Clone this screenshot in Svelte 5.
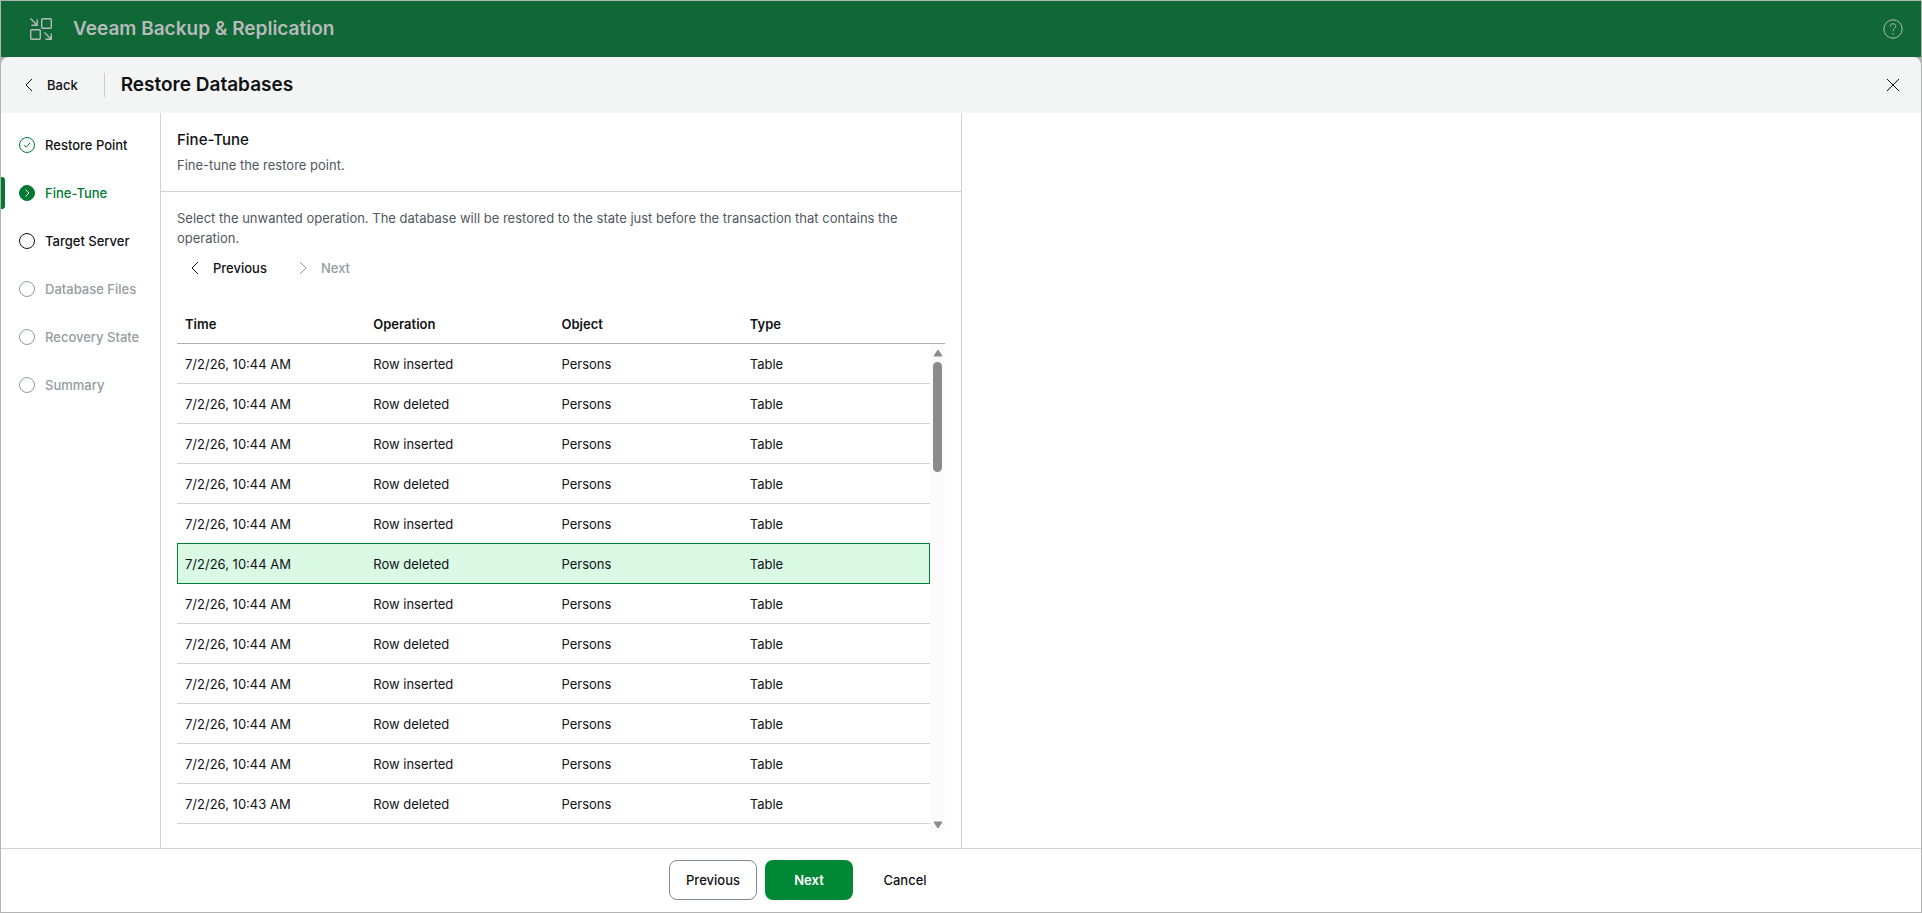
<script lang="ts">
	type Step = { label: string; state: 'done' | 'active' | 'open' | 'disabled' };

	const steps: Step[] = [
		{ label: 'Restore Point', state: 'done' },
		{ label: 'Fine-Tune', state: 'active' },
		{ label: 'Target Server', state: 'open' },
		{ label: 'Database Files', state: 'disabled' },
		{ label: 'Recovery State', state: 'disabled' },
		{ label: 'Summary', state: 'disabled' }
	];

	const operations = Array.from({ length: 12 }, (_, i) => ({
		time: i === 11 ? '7/2/26, 10:43 AM' : '7/2/26, 10:44 AM',
		operation: i % 2 ? 'Row deleted' : 'Row inserted',
		object: 'Persons',
		type: 'Table'
	}));

	let selected = $state(5);
</script>

{#snippet chevron(dir: string)}
	<svg class="chevron" viewBox="0 0 16 16" aria-hidden="true">
		<path d={dir === 'left' ? 'M11 2 5 8l6 6' : 'M5 2l6 6-6 6'} />
	</svg>
{/snippet}

<div class="app">
	<header class="topbar">
		<svg class="logo" viewBox="0 0 24 24" aria-hidden="true">
			<rect x="12.7" y="1.7" width="9.6" height="9.6" rx="1" />
			<rect x="1.7" y="12.7" width="9.6" height="9.6" rx="1" />
			<path d="M1.500 1.500 8 8M8.200 2.500v5.700H2.500M15.500 15.500 22 22M22.300 16.500v5.800h-5.800" />
		</svg>
		<span class="product">Veeam Backup &amp; Replication</span>
		<button class="icon-button" type="button" aria-label="Help">
			<svg viewBox="0 0 20 20" width="20" height="20">
				<circle cx="10" cy="10" r="9.2" />
				<path d="M7.200 7.500c0-1.700 1.200-2.700 2.800-2.700s2.800 1 2.800 2.500c0 2.200-2.800 2.300-2.800 4.900M10 14v1.600" />
			</svg>
		</button>
	</header>

	<div class="titlebar">
		<button class="back" type="button">{@render chevron('left')}Back</button>
		<h1>Restore Databases</h1>
		<button class="icon-button close" type="button" aria-label="Close">
			<svg viewBox="0 0 20 20" width="20" height="20">
				<path d="m4 4 12 12M16 4 4 16" />
			</svg>
		</button>
	</div>

	<div class="content">
		<div class="wizard">
			<nav class="steps">
				{#each steps as step}
					<button class="step {step.state}" type="button" disabled={step.state === 'disabled'}>
						<svg viewBox="0 0 16 16" aria-hidden="true">
							<circle cx="8" cy="8" r="7.5" />
							{#if step.state === 'done'}
								<path d="m5 8.200 2.200 2L11 6" />
							{:else if step.state === 'active'}
								<path d="m6.500 4.500 3.500 3.500-3.500 3.500" />
							{/if}
						</svg>
						{step.label}
					</button>
				{/each}
			</nav>

			<main class="panel">
				<div class="panel-head">
					<h2>Fine-Tune</h2>
					<p>Fine-tune the restore point.</p>
				</div>
				<div class="panel-body">
					<p>
						Select the unwanted operation. The database will be restored to the state just before the
						transaction that contains the operation.
					</p>
					<div class="toolbar">
						<button type="button">{@render chevron('left')}Previous</button>
						<button type="button" disabled>{@render chevron('right')}Next</button>
					</div>
					<div class="grid">
						<div class="table-wrap">
							<table>
								<thead>
									<tr>
										<th>Time</th>
										<th>Operation</th>
										<th>Object</th>
										<th>Type</th>
									</tr>
								</thead>
								<tbody>
									{#each operations as op, i}
										<tr class:selected={selected === i} onclick={() => (selected = i)}>
											<td>{op.time}</td>
											<td>{op.operation}</td>
											<td>{op.object}</td>
											<td>{op.type}</td>
										</tr>
									{/each}
								</tbody>
							</table>
						</div>
						<div class="scroll" aria-hidden="true">
							<div class="scroll-head"></div>
							<div class="track">
								<svg viewBox="0 0 10 8"><path d="M5 1 9 7H1z" /></svg>
								<div class="thumb"></div>
								<svg viewBox="0 0 10 8"><path d="M5 7 1 1h8z" /></svg>
							</div>
						</div>
					</div>
				</div>
			</main>
		</div>
		<aside class="side"></aside>
	</div>

	<footer>
		<div class="actions">
			<button type="button" class="outlined">Previous</button>
			<button type="button" class="primary">Next</button>
			<button type="button">Cancel</button>
		</div>
	</footer>
</div>

<style>
	:global(body) {
		margin: 0;
	}
	.app {
		display: flex;
		flex-direction: column;
		box-sizing: border-box;
		min-height: 100vh;
		border: 1px solid #b3b3b3;
		background: #b3b3b3;
		color: #0f1214;
		font-family: Inter, 'Liberation Sans', sans-serif;
		font-size: 13px;
		line-height: 20px;
	}
	button {
		display: flex;
		align-items: center;
		margin: 0;
		padding: 0;
		border: none;
		background: none;
		color: inherit;
		font: inherit;
		cursor: pointer;
	}
	button:disabled {
		cursor: default;
	}
	svg {
		flex: none;
		fill: none;
		stroke: currentColor;
	}
	h1,
	h2,
	p {
		margin: 0;
	}
	.chevron {
		width: 16px;
		height: 16px;
	}
	.icon-button {
		margin-left: auto;
	}
	.topbar {
		display: flex;
		align-items: center;
		height: 56px;
		padding: 0 18px 0 28px;
		background: #106836;
		color: #b7babc;
	}
	.logo {
		width: 24px;
		height: 24px;
		margin-right: 20px;
		stroke-width: 1.4;
	}
	.product {
		font-size: 19px;
		font-weight: 600;
	}
	.titlebar {
		display: flex;
		align-items: center;
		height: 56px;
		padding: 0 18px 0 20px;
		border-radius: 8px 8px 0 0;
		background: #f3f4f4;
	}
	.back {
		gap: 10px;
		height: 24px;
		padding-right: 26px;
		border-right: 1px solid #c9cdcf;
		font-weight: 500;
	}
	h1 {
		margin-left: 16px;
		font-size: 19px;
		font-weight: 600;
		line-height: 24px;
	}
	.content {
		display: flex;
		flex: 1;
		background: #fff;
	}
	.wizard {
		display: flex;
		width: 50%;
	}
	.side {
		flex: 1;
		border-left: 1px solid #ced2d3;
	}
	.steps {
		display: flex;
		flex: none;
		flex-direction: column;
		box-sizing: border-box;
		width: 160px;
		padding-top: 8px;
		border-right: 1px solid #ced2d3;
	}
	.step {
		position: relative;
		gap: 10px;
		height: 48px;
		padding-left: 18px;
		font-weight: 500;
		white-space: nowrap;
	}
	.step svg {
		width: 16px;
		height: 16px;
	}
	.step.done svg {
		color: #007a33;
	}
	.step.active {
		color: #007a33;
	}
	.step.active circle {
		fill: #007a33;
	}
	.step.active path {
		stroke: #fff;
	}
	.step.active::before {
		content: '';
		position: absolute;
		top: 8px;
		left: 0;
		width: 4px;
		height: 32px;
		border-radius: 0 3px 3px 0;
		background: #007a33;
	}
	.step.disabled {
		color: #949c9f;
	}
	.panel {
		display: flex;
		flex: 1;
		flex-direction: column;
		min-width: 0;
	}
	.panel-head {
		padding: 16px;
		border-bottom: 1px solid #ced2d3;
	}
	h2 {
		margin-bottom: 4px;
		font-size: 15px;
		font-weight: 500;
		line-height: 22px;
	}
	p {
		color: #505861;
	}
	.panel-body {
		display: flex;
		flex: 1;
		flex-direction: column;
		padding: 16px;
	}
	.toolbar {
		display: flex;
		gap: 8px;
		height: 40px;
		margin-bottom: 16px;
	}
	.toolbar button {
		gap: 10px;
		padding: 0 10px;
		font-weight: 500;
	}
	.toolbar button:disabled {
		color: #949c9f;
	}
	.grid {
		display: flex;
		flex: 1;
	}
	.table-wrap {
		flex: 1;
	}
	table {
		width: 100%;
		border-spacing: 0;
		table-layout: fixed;
	}
	th,
	td {
		box-sizing: border-box;
		height: 40px;
		padding: 0 8px;
		border-bottom: 1px solid #ced2d3;
		text-align: left;
	}
	th {
		border-bottom-color: #adb0b1;
		font-weight: 600;
	}
	tr.selected {
		background: #d9f9e5;
	}
	tr.selected td,
	tr:has(+ tr.selected) td {
		border-bottom-color: #007f36;
	}
	tr.selected td:first-child {
		box-shadow: inset 1px 0 #007f36;
	}
	tr.selected td:last-child {
		box-shadow: inset -1px 0 #007f36;
	}
	.scroll {
		display: flex;
		flex-direction: column;
		width: 15px;
	}
	.scroll-head {
		height: 39px;
		border-bottom: 1px solid #adb0b1;
	}
	.track {
		display: flex;
		flex: 1;
		flex-direction: column;
		align-items: center;
		padding: 5px 0 3px;
		background: #fbfbfb;
	}
	.track svg {
		width: 10px;
		height: 8px;
		fill: #8b8b8b;
		stroke: #8b8b8b;
		stroke-linejoin: round;
	}
	.thumb {
		width: 9px;
		height: 110px;
		margin: 5px 0 auto;
		border-radius: 5px;
		background: #8b8b8b;
	}
	footer {
		border-top: 1px solid #ced2d3;
		background: #fff;
	}
	.actions {
		display: flex;
		justify-content: flex-end;
		gap: 8px;
		box-sizing: border-box;
		width: 50%;
		padding: 11px 12px 12px;
	}
	.actions button {
		justify-content: center;
		min-width: 88px;
		height: 40px;
		padding: 0 16px;
		border: 1px solid transparent;
		border-radius: 8px;
		font-weight: 500;
	}
	.actions .outlined {
		border-color: #838a91;
	}
	.actions .primary {
		background: #008836;
		color: #fff;
		font-weight: 600;
	}
</style>
